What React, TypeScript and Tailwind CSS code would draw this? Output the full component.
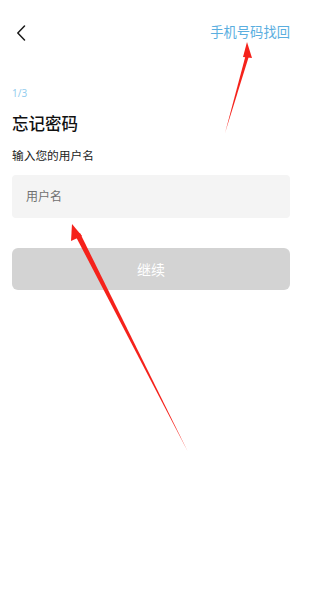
import { useState } from 'react';

export default function App() {
  const [name, setName] = useState('');

  return (
    <div
      className="relative w-[312px] h-[607px] bg-white overflow-hidden"
      style={{ fontFamily: '"Noto Sans", "Noto Sans CJK SC", sans-serif' }}
    >
      {/* Top bar */}
      <div className="flex items-center justify-between pl-[14px] pr-[22px] pt-[22px] h-[44px]">
        <button className="w-[14px] h-[18px] flex items-center justify-center">
          <svg width="10" height="16" viewBox="0 0 10 16" fill="none">
            <path d="M8.5 1 L1.8 8 L8.5 15" stroke="#1a1a1a" strokeWidth="1.5" strokeLinecap="round" strokeLinejoin="round" />
          </svg>
        </button>
        <span className="text-[13.3px] leading-none text-[#5aaedf]">手机号码找回</span>
      </div>

      <div className="px-[12px]">
        <div className="mt-[44px] text-[10px] leading-none text-[#94cdee]">1/3</div>
        <h1 className="mt-[18px] text-[16.5px] leading-none font-medium text-[#111]">忘记密码</h1>
        <p className="mt-[17px] text-[11.7px] leading-none text-[#222]">输入您的用户名</p>

        <input
          value={name}
          onChange={(e) => setName(e.target.value)}
          placeholder="用户名"
          className="mt-[14px] w-[278px] h-[43px] rounded-[4px] bg-[#f4f4f4] px-[14px] text-[12px] text-[#333] placeholder:text-[#707070] outline-none"
        />

        <button
          disabled
          className="mt-[30px] w-[278px] h-[42px] rounded-[6px] bg-[#d3d3d3] text-[14px] text-white"
        >
          继续
        </button>
      </div>

      {/* Annotation arrows */}
      <svg className="absolute inset-0 pointer-events-none" width="312" height="607" viewBox="0 0 312 607">
        <polygon points="247,42 252,58 243,57" fill="#f5221b" />
        <polygon points="246,54 249,56 225,133" fill="#f5221b" />
        <polygon points="72,224 82,236 71,241" fill="#f5221b" />
        <polygon points="75,235 80,233 188,452" fill="#f5221b" />
      </svg>
    </div>
  );
}
